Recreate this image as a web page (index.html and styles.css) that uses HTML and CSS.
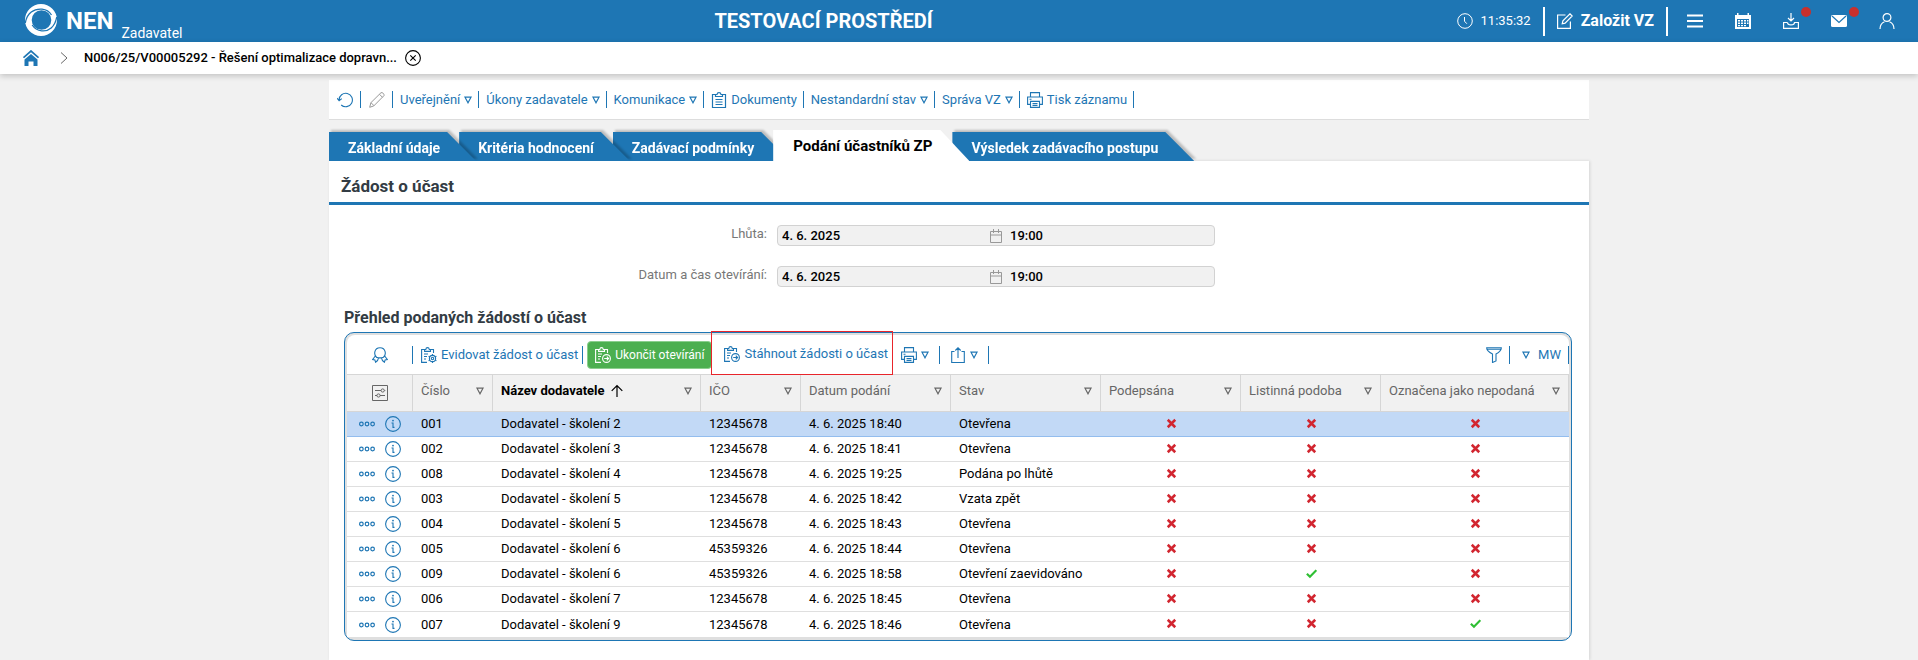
FILE: index.html
```html
<!DOCTYPE html>
<html lang="cs">
<head>
<meta charset="utf-8">
<title>NEN – Žádost o účast</title>
<link rel="stylesheet" href="styles.css">
</head>
<body>
<svg class="sprite" aria-hidden="true">
  <symbol id="tri" viewBox="0 0 8 8"><path d="M1 1.2h6L4 6.8z" fill="none" stroke="currentColor" stroke-width="1.2"/></symbol>
  <symbol id="dots" viewBox="0 0 16 16"><g fill="none" stroke="currentColor" stroke-width="1.2"><circle cx="2.4" cy="8" r="1.8"/><circle cx="8" cy="8" r="1.8"/><circle cx="13.6" cy="8" r="1.8"/></g></symbol>
  <symbol id="info" viewBox="0 0 16 16"><circle cx="8" cy="8" r="7.4" fill="none" stroke="currentColor" stroke-width="1.1"/><circle cx="8" cy="4.6" r=".9" fill="currentColor"/><path d="M6.5 7H8v4.4h1.5" fill="none" stroke="currentColor" stroke-width="1.1"/></symbol>
  <symbol id="no" viewBox="0 0 10 10"><path d="M1.6 1.600l6.800 6.800M8.400 1.600L1.600 8.400" stroke="#d22630" stroke-width="2.300"/></symbol>
  <symbol id="yes" viewBox="0 0 10 10"><path d="M.8 5.2l2.8 2.8L9.4 2" fill="none" stroke="#2fbf34" stroke-width="2"/></symbol>
  <symbol id="print" viewBox="0 0 16 16"><path d="M3.5 5V.6h9V5M3.5 12.4H.6V5h14.8v7.4h-2.9M3.5 9.4h9v6h-9zM5.5 11.5h5M5.5 13.4h5M2.5 7.2h2" fill="none" stroke="currentColor" stroke-width="1.1"/></symbol>
  <symbol id="cal" viewBox="0 0 12 14"><path d="M.5 2.5h11v11H.5zM.5 6h11M3.5 0v4M8.500 0v4" fill="none" stroke="currentColor"/></symbol>
  <symbol id="clip" viewBox="0 0 16 16"><path d="M4.5 2.5h-3v13h13v-13h-3M4.500 4.500v-2h1.500C6.300 0 9.700 0 10 2.500h1.500v2zM4.500 7.500h7M4.500 10h7M4.500 12.500h7" fill="none" stroke="currentColor" stroke-width="1.2"/></symbol>
  <symbol id="clipgear" viewBox="0 0 16 16"><g fill="none" stroke="currentColor" stroke-width="1.1"><path d="M6 15.400H.600V2.500h3M9.500 2.500h3V6M3.600 4.400V2.500h1.200C5 0 8 0 8.300 2.500h1.200v1.900zM3 7h4M3 9.500h3M3 12h2"/><circle cx="11.500" cy="11.500" r="3.100"/><circle cx="11.500" cy="11.500" r="1.200"/><path d="M11.500 8.400V7M11.500 16v-1.400M8.800 10l-1.200-.7M15.400 13.700l-1.200-.7M8.800 13l-1.200.7M15.400 9.300l-1.200.7"/></g></symbol>
  <symbol id="cliparrow" viewBox="0 0 16 16"><g fill="none" stroke="currentColor" stroke-width="1.100"><path d="M6 15.400H.600V2.500h3M9.500 2.500h3V6M3.600 4.400V2.500h1.200C5 0 8 0 8.300 2.500h1.200v1.900zM3 7h4M3 9.500h3M3 12h2"/><circle cx="11.500" cy="11.500" r="3.900"/><path d="M9.200 11.500h4.300M11.800 9.700l1.800 1.800-1.800 1.800"/></g></symbol>
</svg>

<header class="topbar">
  <a class="brand" href="#">
    <svg class="brand-logo" viewBox="0 0 32 32"><path fill="#fff" fill-rule="evenodd" d="M16 0a16 16 0 1 1 0 32 16 16 0 0 1 0-32zM16.500 6.200a9.800 9.800 0 1 0 0 19.600 9.800 9.800 0 0 0 0-19.600z"/><path d="M.3 19C2 9 9 4.500 17 5.200c4 .4 7.500 2.600 9.500 5.800M31.700 13c-1.700 10-8 14.500-15 13.800-4-.4-7.500-2.600-9.500-5.800" fill="none" stroke="#1e76b4" stroke-width="1.300"/></svg>
    <span class="brand-name">NEN</span><span class="brand-role">Zadavatel</span>
  </a>
  <div class="env">TESTOVACÍ PROSTŘEDÍ</div>
  <div class="clock"><svg class="i16" viewBox="0 0 16 16"><circle cx="8" cy="8" r="7.300" fill="none" stroke="currentColor"/><path d="M7.500 4v4.200l2.300 2.500" fill="none" stroke="currentColor"/></svg><span>11:35:32</span></div>
  <button class="create"><svg class="i16" viewBox="0 0 16 16"><path d="M8.500 2H.600v13.400h12.800V8.500M5.200 10.800l.7-2.900L13 .8l2.200 2.200-7.100 7.100z" fill="none" stroke="currentColor" stroke-width="1.200"/></svg>Založit VZ</button>
  <nav class="tools">
    <button aria-label="Menu"><svg class="i16" viewBox="0 0 16 16"><path d="M0 2.500h16M0 8h16M0 13.500h16" stroke="currentColor" stroke-width="2"/></svg></button>
    <button aria-label="Kalendář"><svg class="i16" viewBox="0 0 16 16"><path d="M0 2h2V0h1.500v2h9V0H14v2h2v14H0z" fill="currentColor"/><path d="M2 6h12v8H2z" fill="#1e76b4"/><path d="M3 7h2v1.500H3zM6 7h2v1.500H6zM9 7h2v1.500H9zM12 7h1.500v1.500H12zM3 9.500h2V11H3zM6 9.500h2V11H6zM9 9.500h2V11H9zM12 9.500h1.500V11H12zM3 12h2v1.300H3zM6 12h2v1.300H6zM9 12h2v1.300H9z" fill="#fff"/></svg></button>
    <button aria-label="Stažené"><svg class="i16" viewBox="0 0 16 16"><path d="M8 0v7.500M5 5l3 3 3-3M4.500 9.500H.600v5.800h14.800V9.500h-3.900c0 3.200-7 3.200-7 0" fill="none" stroke="currentColor" stroke-width="1.200"/></svg><i class="dot"></i></button>
    <button aria-label="Zprávy"><svg class="i16" viewBox="0 0 16 16"><rect y="2" width="16" height="12" rx="1.500" fill="currentColor"/><path d="M1 3l7 6.500L15 3" fill="none" stroke="#1e76b4" stroke-width="1.200"/></svg><i class="dot"></i></button>
    <button aria-label="Uživatel"><svg class="i16" viewBox="0 0 16 16"><circle cx="8" cy="4.500" r="3.900" fill="none" stroke="currentColor" stroke-width="1.200"/><path d="M1 16c0-4.500 2.500-6.500 4.500-7.300M15 16c0-4.500-2.500-6.500-4.500-7.300" fill="none" stroke="currentColor" stroke-width="1.200"/></svg></button>
  </nav>
</header>

<nav class="crumbs">
  <a href="#" class="home" aria-label="Domů"><svg class="i16" viewBox="0 0 16 16"><path d="M.5 7.700L8 1l7.500 6.700" fill="none" stroke="#1e76b4" stroke-width="1.700"/><path d="M1.500 9.500L8 4l6.500 5.500V16h-4v-4.500h-5V16h-4z" fill="#1e76b4"/></svg></a>
  <svg class="chev" viewBox="0 0 8 12"><path d="M1 .5L7 6l-6 5.500" fill="none" stroke="#666"/></svg>
  <a href="#" class="crumb">N006/25/V00005292 - Řešení optimalizace dopravn...</a>
  <button class="close" aria-label="Zavřít"><svg class="i16" viewBox="0 0 16 16"><circle cx="8" cy="8" r="7.400" fill="none" stroke="#000" stroke-width="1.100"/><path d="M5.300 5.300l5.400 5.400M10.700 5.300l-5.400 5.400" stroke="#000" stroke-width="1.100"/></svg></button>
</nav>

<main class="page">
  <div class="actions">
    <button class="icon" aria-label="Obnovit"><svg class="i16" viewBox="0 0 16 16"><path d="M2 8a6.700 6.700 0 1 1 2.200 5M0 6.200l2.100 2.600 2.700-2.200" fill="none" stroke="currentColor" stroke-width="1.100"/></svg></button>
    <button class="icon muted" aria-label="Upravit"><svg class="i16" viewBox="0 0 16 16"><path d="M.700 15.300l1.200-4.600L12 .7c1.500-.6 3.400 1.200 3 2.900L4.800 13.900zM10.500 2.300l3 3M2 10.700l3 3" fill="none" stroke="currentColor"/></svg></button>
    <button>Uveřejnění<svg class="tri"><use href="#tri"/></svg></button>
    <button>Úkony zadavatele<svg class="tri"><use href="#tri"/></svg></button>
    <button>Komunikace<svg class="tri"><use href="#tri"/></svg></button>
    <button><svg class="i16"><use href="#clip"/></svg>Dokumenty</button>
    <button>Nestandardní stav<svg class="tri"><use href="#tri"/></svg></button>
    <button>Správa VZ<svg class="tri"><use href="#tri"/></svg></button>
    <button><svg class="i16"><use href="#print"/></svg>Tisk záznamu</button>
  </div>

  <nav class="tabs">
    <div class="tab"><button>Základní údaje</button></div>
    <div class="tab"><button>Kritéria hodnocení</button></div>
    <div class="tab"><button>Zadávací podmínky</button></div>
    <div class="tab active"><button>Podání účastníků ZP</button></div>
    <div class="tab"><button>Výsledek zadávacího postupu</button></div>
  </nav>

  <section class="panel">
    <h1>Žádost o účast</h1>
    <form class="form">
      <div class="field">
        <label for="lhuta">Lhůta:</label>
        <div class="box"><input id="lhuta" value="4. 6. 2025" readonly><svg class="cal"><use href="#cal"/></svg><input class="time" aria-label="Lhůta čas" value="19:00" readonly></div>
      </div>
      <div class="field">
        <label for="otevirani">Datum a čas otevírání:</label>
        <div class="box"><input id="otevirani" value="4. 6. 2025" readonly><svg class="cal"><use href="#cal"/></svg><input class="time" aria-label="Čas otevírání" value="19:00" readonly></div>
      </div>
    </form>

    <h2>Přehled podaných žádostí o účast</h2>
    <div class="grid">
      <div class="gridbar">
        <button class="lead" aria-label="Podpis"><svg class="i16" viewBox="0 0 16 16"><path d="M4.700 10.500C1.500 8 2 .7 8 .7s6.500 7.300 3.300 9.800M3.300 9L.7 12.500l2.200.4.700 2.400c1.500-.8 2.700-2.500 3-4.600-1-.1-1.600-.2-2.200-.5M12.700 9l2.600 3.500-2.200.4-.7 2.400c-1.500-.8-2.700-2.500-3-4.600 1-.1 1.600-.2 2.200-.5M6.600 10.900h2.800" fill="none" stroke="currentColor" stroke-width="1.100"/></svg></button>
        <button class="evidence"><svg class="i16"><use href="#clipgear"/></svg>Evidovat žádost o účast</button>
        <button class="green"><svg class="i16"><use href="#cliparrow"/></svg>Ukončit otevírání</button>
        <div class="marked"><button><svg class="i16"><use href="#cliparrow"/></svg>Stáhnout žádosti o účast</button></div>
        <button class="menu" aria-label="Tisk"><svg class="i16"><use href="#print"/></svg><svg class="tri"><use href="#tri"/></svg></button>
        <button class="menu" aria-label="Export"><svg class="i16" viewBox="0 0 16 16"><path d="M4.500 4.500H1.700v11h12.600v-11h-2.800M8 11V.8M5.300 3.500L8 .8l2.700 2.700" fill="none" stroke="currentColor" stroke-width="1.100"/></svg><svg class="tri"><use href="#tri"/></svg></button>
        <span class="spacer"></span>
        <button aria-label="Filtr"><svg class="i16" viewBox="0 0 16 16"><path d="M.700.8h14.600c.1 2.200-1.800 4.200-5.300 6.200v7l-3.500 1.500V7C2.800 5 .6 3 .700.8zM1 2.200h14" fill="none" stroke="currentColor" stroke-width="1.100"/></svg></button>
        <button class="view"><svg class="tri"><use href="#tri"/></svg>MW</button>
      </div>
      <table>
        <colgroup><col class="w66"><col class="w80"><col class="w208"><col class="w100"><col class="w150"><col class="w150"><col class="w140"><col class="w140"><col></colgroup>
        <thead>
          <tr>
            <th class="setup"><button aria-label="Nastavení sloupců"><svg class="i16" viewBox="0 0 16 16"><path d="M.5.5h15v15H.5zM3 5.500h6M12.500 5.500h.8M3 10.500h2M8 10.500h5" fill="none" stroke="currentColor"/><circle cx="10.700" cy="5.500" r="1.600" fill="none" stroke="currentColor"/><circle cx="6.500" cy="10.500" r="1.600" fill="none" stroke="currentColor"/></svg></button></th>
            <th><div>Číslo<svg class="tri"><use href="#tri"/></svg></div></th>
            <th class="sorted"><div>Název dodavatele<svg class="arrow" viewBox="0 0 12 14"><path d="M6 13V1.500M.7 6.800L6 1.500l5.300 5.300" fill="none" stroke="currentColor" stroke-width="1.200"/></svg><svg class="tri"><use href="#tri"/></svg></div></th>
            <th><div>IČO<svg class="tri"><use href="#tri"/></svg></div></th>
            <th><div>Datum podání<svg class="tri"><use href="#tri"/></svg></div></th>
            <th><div>Stav<svg class="tri"><use href="#tri"/></svg></div></th>
            <th><div>Podepsána<svg class="tri"><use href="#tri"/></svg></div></th>
            <th><div>Listinná podoba<svg class="tri"><use href="#tri"/></svg></div></th>
            <th><div>Označena jako nepodaná<svg class="tri"><use href="#tri"/></svg></div></th>
          </tr>
        </thead>
        <tbody id="rows"></tbody>
      </table>
    </div>
  </section>
</main>
<script src="rows.js"></script>
</body>
</html>
```

FILE: rows.js
```js
const rows = [
  ["001", "Dodavatel - školení 2", "12345678", "4. 6. 2025 18:40", "Otevřena", 0, 0, 0],
  ["002", "Dodavatel - školení 3", "12345678", "4. 6. 2025 18:41", "Otevřena", 0, 0, 0],
  ["008", "Dodavatel - školení 4", "12345678", "4. 6. 2025 19:25", "Podána po lhůtě", 0, 0, 0],
  ["003", "Dodavatel - školení 5", "12345678", "4. 6. 2025 18:42", "Vzata zpět", 0, 0, 0],
  ["004", "Dodavatel - školení 5", "12345678", "4. 6. 2025 18:43", "Otevřena", 0, 0, 0],
  ["005", "Dodavatel - školení 6", "45359326", "4. 6. 2025 18:44", "Otevřena", 0, 0, 0],
  ["009", "Dodavatel - školení 6", "45359326", "4. 6. 2025 18:58", "Otevření zaevidováno", 0, 1, 0],
  ["006", "Dodavatel - školení 7", "12345678", "4. 6. 2025 18:45", "Otevřena", 0, 0, 0],
  ["007", "Dodavatel - školení 9", "12345678", "4. 6. 2025 18:46", "Otevřena", 0, 0, 1]
];
const cell = v => typeof v === "number"
  ? `<td class="flag"><svg class="mark" role="img" aria-label="${v ? "Ano" : "Ne"}"><use href="#${v ? "yes" : "no"}"/></svg></td>`
  : `<td>${v}</td>`;
document.getElementById("rows").innerHTML = rows.map((r, i) =>
  `<tr${i ? "" : ' class="selected"'}><td><div class="rowtools"><button aria-label="Akce"><svg class="i16"><use href="#dots"/></svg></button><button aria-label="Detail"><svg class="i16"><use href="#info"/></svg></button></div></td>${r.map(cell).join("")}</tr>`
).join("");
```

FILE: styles.css
```css
* { box-sizing: border-box; }
body {
  margin: 0;
  min-height: 100vh;
  background: #f1f1f1;
  color: #000;
  font: 13px/16px Roboto, "Liberation Sans", sans-serif;
}
button { display: flex; align-items: center; margin: 0; padding: 0; border: 0; background: none; color: inherit; font: inherit; white-space: nowrap; cursor: pointer; }
a { color: inherit; text-decoration: none; }
svg { display: block; flex: none; }
.sprite { position: absolute; width: 0; height: 0; }
.i16 { width: 16px; height: 16px; }
.tri { width: 8px; height: 8px; }

.topbar { display: flex; align-items: center; height: 42px; padding: 0 23px 0 25px; background: #1e76b4; color: #fff; }
.brand { display: flex; align-items: flex-end; height: 42px; }
.brand-logo { width: 32px; height: 32px; margin: 0 9px 6px 0; }
.brand-name { padding-bottom: 7px; font-size: 24px; line-height: 28px; font-weight: 700; }
.brand-role { padding: 0 0 1px 8px; font-size: 14px; line-height: 16px; }
.env { flex: 1; padding-left: 8px; text-align: center; font-size: 20px; line-height: 24px; font-weight: 700; }
.clock { display: flex; align-items: center; gap: 8px; padding-right: 12px; }
.create { gap: 8px; height: 29px; padding: 0 12px; border: solid #fff; border-width: 0 2px; font-size: 16px; font-weight: 700; }
.tools { display: flex; gap: 32px; margin-left: 19px; }
.tools button { position: relative; }
.dot { position: absolute; top: -6px; right: -12px; width: 10px; height: 10px; border-radius: 50%; background: #c8302d; }

.crumbs { position: relative; display: flex; align-items: center; height: 32px; padding-left: 23px; background: #fff; box-shadow: 0 2px 6px rgba(0, 0, 0, .2); }
.home { padding-right: 21px; }
.chev { width: 8px; height: 12px; margin-right: 16px; }
.crumb { margin-right: 8px; font-weight: 500; }

.page { display: flex; flex-direction: column; max-width: 1260px; min-height: calc(100vh - 74px); margin: 0 auto; padding-top: 6px; }
.actions { display: flex; align-items: center; height: 40px; background: #fff; border-bottom: 1px solid #ddd; color: #1e76b4; }
.actions button { gap: 4px; height: 17px; padding: 0 6px 0 7px; border-right: 1px solid #1e76b4; }
.actions .icon { padding: 0 7px 0 8px; }
.actions .muted { color: #999; }

.tabs { display: flex; align-items: flex-end; height: 41px; }
.tab { margin-right: -17px; filter: drop-shadow(2px -2px 1px rgba(0, 0, 0, .22)); }
.tab:nth-child(1) { z-index: 5; }
.tab:nth-child(2) { z-index: 4; }
.tab:nth-child(3) { z-index: 3; }
.tab.active { z-index: 6; filter: none; }
.tab button { height: 29px; padding: 2px 36px 0 19px; background: #1e76b4; color: #fff; font-size: 14px; font-weight: 700; clip-path: polygon(0 0, calc(100% - 29px) 0, 100% 100%, 0 100%); }
.tab.active button { height: 31px; padding: 0 37px 0 20px; background: #fff; color: #000; font-size: 15px; }

.panel { flex: 1; background: #fff; box-shadow: 1px 0 3px rgba(0, 0, 0, .12); }
h1 { margin: 0; padding: 13px 12px 4px; border-bottom: 3px solid #1e76b4; color: #333c44; font-size: 17px; line-height: 24px; font-weight: 700; }
.form { display: grid; gap: 20px; padding-top: 20px; }
.field { display: grid; grid-template-columns: 438px 438px; gap: 10px; color: #777; }
.field label { text-align: right; line-height: 18px; }
.box { display: flex; align-items: center; height: 21px; border: 1px solid #d2d2d2; border-radius: 4px; background: #f1f1f1; }
.box input { flex: 1; min-width: 0; height: 19px; padding: 0 4px; border: 0; background: none; color: #000; font: 500 13px/16px Roboto, "Liberation Sans", sans-serif; outline: 0; }
.box .time { flex: 0 0 212px; padding-left: 8px; }
.cal { width: 12px; height: 14px; color: #999; }

h2 { margin: 0; padding: 21px 15px 4px; color: #333c44; font-size: 16px; line-height: 20px; font-weight: 700; }
.grid { margin: 0 17px 0 15px; padding: 2px 2px 3px; border: 1px solid #1e76b4; border-radius: 10px; background: #dfdfdf; }
.gridbar { display: flex; align-items: center; height: 39px; border-radius: 8px 8px 0 0; background: #fff; color: #1e76b4; }
.gridbar button { gap: 4px; height: 18px; padding: 0 7px 0 10px; border-right: 1px solid #1e76b4; }
.gridbar .lead { width: 66px; justify-content: center; padding: 0; }
.gridbar .evidence { padding: 0 4px 0 8px; }
.gridbar .green { height: 28px; margin-left: 4px; padding: 0 7px; border: 1px solid #8bcf8e; border-radius: 4px; background: #4caf50; color: #fff; font-size: 12px; }
.marked { display: flex; align-items: center; align-self: stretch; margin: -4px 0 -1px -1px; padding-top: 2px; border: 1px solid #e8252b; }
.marked button { padding: 0 4px 0 12px; border: 0; }
.gridbar .menu { padding: 0 10px; }
.gridbar .marked + .menu { padding-left: 8px; }
.spacer { flex: 1; }
.gridbar .view { gap: 8px; padding-left: 12px; }
table { width: 100%; table-layout: fixed; border-collapse: separate; border-spacing: 0; background: #fff; }
.w66 { width: 66px; }
.w80 { width: 80px; }
.w100 { width: 100px; }
.w140 { width: 140px; }
.w150 { width: 150px; }
.w208 { width: 208px; }
th { height: 38px; padding: 0 8px 4px; border: solid #d6d6d6; border-width: 1px 1px 1px 0; background: #f1f1f1; color: #666; font-weight: 400; text-align: left; white-space: nowrap; }
th div { display: flex; align-items: center; }
th .tri { margin-left: auto; }
th.setup { padding: 0; }
th.setup button { margin: 0 auto; }
th.sorted { color: #000; font-weight: 700; }
th.sorted .tri { color: #666; }
.arrow { width: 12px; height: 14px; margin-left: 6px; }
td { height: 25px; padding: 0 8px; border-bottom: 1px solid #dfdfdf; white-space: nowrap; }
tr:last-child td { border-bottom: 0; }
.selected td { background: #c2d9f6; border-color: #93bdee; }
.rowtools { display: flex; gap: 10px; padding-left: 4px; color: #1e76b4; }
.flag { padding-bottom: 2px; }
.mark { width: 11px; height: 11px; margin: 0 auto; }
```
